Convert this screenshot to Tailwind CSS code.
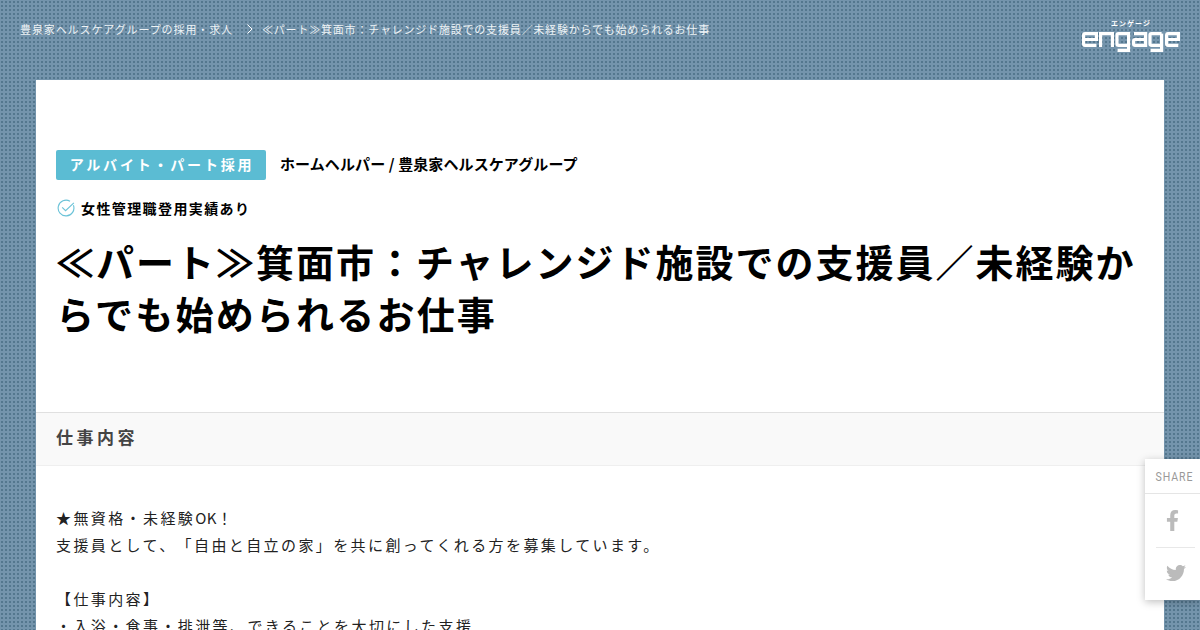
<!DOCTYPE html>
<html lang="ja">
<head>
    <meta charset="UTF-8" />
    <meta name="viewport" content="width=device-width, initial-scale=1.0" />
    <title>≪パート≫箕面市：チャレンジド施設での支援員／未経験からでも始められるお仕事</title>
    <script src="https://cdn.jsdelivr.net/npm/@tailwindcss/browser@4"></script>
</head>
<body class="font-['Noto_Sans_CJK_JP','Noto_Sans',sans-serif] [text-spacing-trim:space-all]">
    <div class="relative h-[630px] overflow-hidden bg-[#7494ac] bg-[radial-gradient(#54778e_1px,transparent_1.3px)] bg-size-[4px_4px]">
        <!-- Header -->
        <header class="flex h-[80px] items-start justify-between pl-[20px] pr-[20px]">
            <nav class="mt-[20px] flex h-[18px] items-center text-[11px] tracking-[0.8px] text-[#eef3f6]">
                <span class="tracking-[0.9px]">豊泉家ヘルスケアグループの採用・求人</span>
                <svg class="ml-[14px] mr-[9px]" width="6" height="10" viewBox="0 0 6 10" fill="none" stroke="#fff" stroke-width="1"><path d="M0.5 0.5 L5 5 L0.5 9.5" /></svg>
                <span>≪パート≫箕面市：チャレンジド施設での支援員／未経験からでも始められるお仕事</span>
            </nav>
            <div class="mt-[18px] flex w-[98px] flex-col items-center">
                <span class="h-[12px] text-[7px] leading-[11px] font-bold tracking-[1px] text-white">エンゲージ</span>
                <svg width="98" height="24" viewBox="0 0 98 24" fill="none" stroke="#fff" stroke-width="3.2">
                    <path d="M1.6 9.5 H14.4 V3.6 H3 Q1.6 3.6 1.6 5 V14 Q1.6 15.4 3 15.4 H14.4" />
                    <path d="M18.6 17 V3.6 H30.4 V17" />
                    <path d="M46.6 9 V3.6 H36.4 Q35 3.6 35 5 V14 Q35 15.4 36.4 15.4 H46.6 V3.6 M46.6 15 V20.4 H35.5" />
                    <path d="M52 3.6 H63.6 V15.4 H53 Q51.6 15.4 51.6 14 V11 Q51.6 9.5 53 9.5 H63.6" />
                    <path d="M79.6 3.6 H69.4 Q68 3.6 68 5 V14 Q68 15.4 69.4 15.4 H79.6 V3.6 M79.6 15 V20.4 H68.5" />
                    <path d="M84.6 9.5 H96.4 V3.6 H86 Q84.6 3.6 84.6 5 V14 Q84.6 15.4 86 15.4 H96.4" />
                </svg>
            </div>
        </header>

        <!-- Job card -->
        <main class="mx-[36px] bg-white">
            <div class="px-[20px] pt-[70px] pb-[73px]">
                <div class="flex items-center">
                    <span class="flex h-[30px] w-[210px] items-center justify-center rounded-[2px] bg-[#5bbcd3] pb-[1px] pl-[2px] text-[14px] font-bold tracking-[2.8px] text-white">アルバイト・パート採用</span>
                    <span class="ml-[14px] pb-[1px] text-[15px] font-bold tracking-[0.1px] text-black">ホームヘルパー / 豊泉家ヘルスケアグループ</span>
                </div>
                <div class="mt-[17px] flex h-[22px] items-center">
                    <svg class="ml-[1px]" width="18" height="18" viewBox="0 0 16 16" fill="none" stroke="#6cc3d8" stroke-width="1">
                        <path d="M14.6 5.6 A7 7 0 1 1 11.6 2" />
                        <path d="M4.6 7.4 L7.6 10.4 L15 3.4" />
                    </svg>
                    <span class="ml-[6px] text-[14px] font-bold tracking-[1.4px] text-black">女性管理職登用実績あり</span>
                </div>
                <h1 class="mt-[16px] text-[38px] leading-[52px] font-bold tracking-[2px] text-black">≪パート≫箕面市：チャレンジド施設での支援員／未経験か<span class="tracking-[2.2px]">らでも始められるお仕事</span></h1>
            </div>

            <section>
                <h2 class="flex h-[54px] items-center border-y border-t-[#e0e0e0] border-b-[#efefef] bg-[#f9f9f9] px-[20px] pb-[4px] text-[17px] font-bold tracking-[3.5px] text-[#444]">仕事内容</h2>
                <p class="px-[20px] pt-[38px] text-[15px] leading-[27px] tracking-[2.4px] text-[#222]">
                    ★無資格・未経験<span class="tracking-[0.5px]">OK</span>！<br />
                    支援員として、「自由と自立の家」を共に創ってくれる方を募集しています。<br />
                    <br />
                    【仕事内容】<br />
                    ・入浴・食事・排泄等、できることを大切にした支援
                </p>
            </section>
        </main>

        <!-- Share widget -->
        <aside class="absolute top-[459px] right-0 h-[141px] w-[55px] bg-white shadow-[0_2px_8px_rgba(0,0,0,0.25)]">
            <div class="flex h-[35px] items-center justify-center border-b border-[#e5e5e5] pt-[2px] pl-[4px] font-['Roboto',sans-serif] text-[12px] tracking-[1px] text-[#999]"><span class="inline-block scale-x-[0.88]">SHARE</span></div>
            <div class="ml-[11px] mr-[5px] flex h-[54px] items-center justify-center border-b border-[#e8e8e8] pr-[6px]">
                <svg width="13" height="21" viewBox="0 0 320 512" fill="#bbb"><path d="M279.14 288l14.22-92.66h-88.91v-60.13c0-25.35 12.42-50.06 52.24-50.06h40.42V6.26S260.43 0 225.36 0c-73.22 0-121.08 44.38-121.08 124.72v70.62H22.89V288h81.39v224h100.17V288z" /></svg>
            </div>
            <div class="ml-[11px] mr-[5px] flex h-[49px] items-center justify-center">
                <svg width="20" height="20" viewBox="0 0 512 512" fill="#bbb"><path d="M459.37 151.716c.325 4.548.325 9.097.325 13.645 0 138.72-105.583 298.558-298.558 298.558-59.452 0-114.68-17.219-161.137-47.106 8.447.974 16.568 1.299 25.34 1.299 49.055 0 94.213-16.568 130.274-44.832-46.132-.975-84.792-31.188-98.112-72.772 6.498.974 12.995 1.624 19.818 1.624 9.421 0 18.843-1.3 27.614-3.573-48.081-9.747-84.143-51.98-84.143-102.985v-1.299c13.969 7.797 30.214 12.67 47.431 13.319-28.264-18.843-46.781-51.005-46.781-87.391 0-19.492 5.197-37.36 14.294-52.954 51.655 63.675 129.3 105.258 216.365 109.807-1.624-7.797-2.599-15.918-2.599-24.04 0-57.828 46.782-104.934 104.934-104.934 30.213 0 57.502 12.67 76.67 33.137 23.715-4.548 46.456-13.32 66.599-25.34-7.798 24.366-24.366 44.833-46.132 57.827 21.117-2.273 41.584-8.122 60.426-16.243-14.292 20.791-32.161 39.308-52.628 54.253z" /></svg>
            </div>
        </aside>
    </div>
</body>
</html>
